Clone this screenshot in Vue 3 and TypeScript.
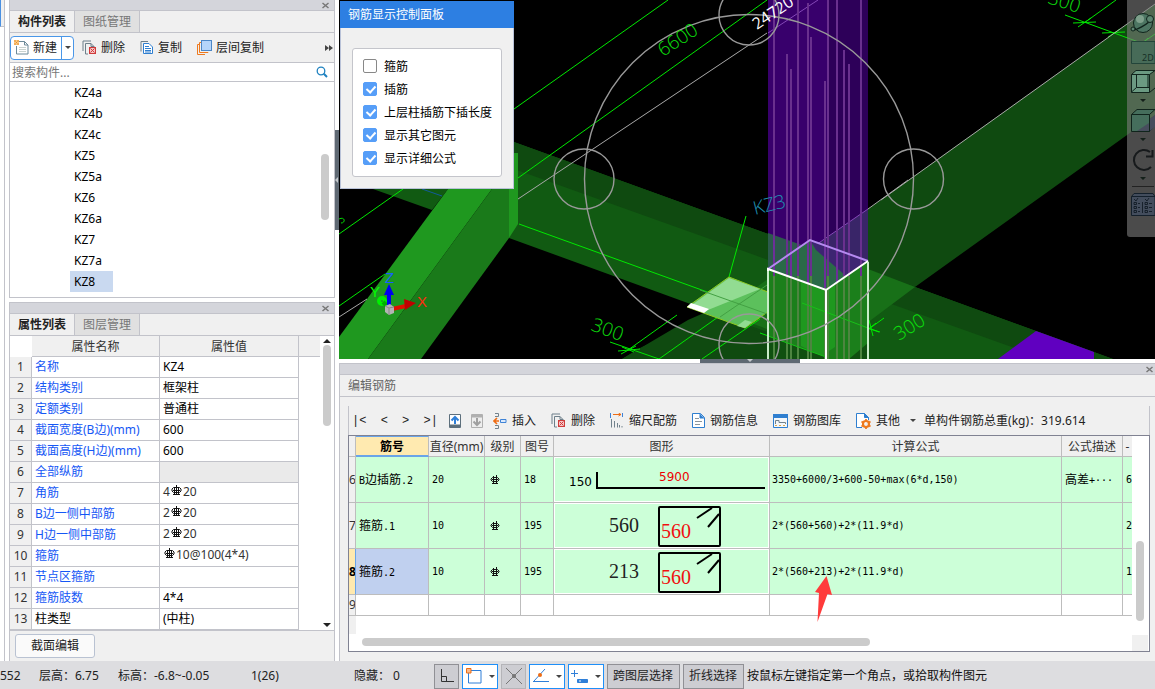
<script setup lang="ts">
import { ref } from 'vue'

interface PropertyRow {
  name: string
  value: string
  linked?: boolean
  disabled?: boolean
  rebar?: boolean
}

interface RebarRow {
  no: number
  name: string
  diameter: string
  code: string
  left: string
  length: string
  formula: string
  note: string
  extra: string
}

const components: string[] = ['KZ4a', 'KZ4b', 'KZ4c', 'KZ5', 'KZ5a', 'KZ6', 'KZ6a', 'KZ7', 'KZ7a', 'KZ8']
const selected = ref('KZ8')
const keyword = ref('')

const options = ref([
  { id: 'hoop', label: '箍筋', on: false },
  { id: 'dowel', label: '插筋', on: true },
  { id: 'upper', label: '上层柱插筋下插长度', on: true },
  { id: 'others', label: '显示其它图元', on: true },
  { id: 'formula', label: '显示详细公式', on: true },
])

const properties: PropertyRow[] = [
  { name: '名称', value: 'KZ4', linked: true },
  { name: '结构类别', value: '框架柱', linked: true },
  { name: '定额类别', value: '普通柱', linked: true },
  { name: '截面宽度(B边)(mm)', value: '600', linked: true },
  { name: '截面高度(H边)(mm)', value: '600', linked: true },
  { name: '全部纵筋', value: '', linked: true, disabled: true },
  { name: '角筋', value: '4#20', linked: true, rebar: true },
  { name: 'B边一侧中部筋', value: '2#20', linked: true, rebar: true },
  { name: 'H边一侧中部筋', value: '2#20', linked: true, rebar: true },
  { name: '箍筋', value: '#10@100(4*4)', linked: true, rebar: true },
  { name: '节点区箍筋', value: '', linked: true },
  { name: '箍筋肢数', value: '4*4', linked: true },
  { name: '柱类型', value: '(中柱)' },
]

const rebars: RebarRow[] = [
  { no: 6, name: 'B边插筋.2', diameter: '20', code: '18', left: '150', length: '5900', formula: '3350+6000/3+600-50+max(6*d,150)', note: '高差+···', extra: '6' },
  { no: 7, name: '箍筋.1', diameter: '10', code: '195', left: '560', length: '560', formula: '2*(560+560)+2*(11.9*d)', note: '', extra: '2' },
  { no: 8, name: '箍筋.2', diameter: '10', code: '195', left: '213', length: '560', formula: '2*(560+213)+2*(11.9*d)', note: '', extra: '1' },
]
const activeRebar = ref(8)

function runs(text: string): { text: string; wide: boolean }[] {
  const parts = text.match(/[\u4e00-\u9fff]+|[^\u4e00-\u9fff]+/g) ?? []
  return parts.map((p) => ({ text: p, wide: /[\u4e00-\u9fff]/.test(p) }))
}

const bars: [number, number][] = [
  [774, 0], [787, 54], [791, 69], [798, 0], [808, 3], [811, 37],
  [825, 81], [828, 0], [837, 0], [844, 50], [849, 64], [861, 0],
]
</script>

<template>
  <div class="app">
    <div class="main">
      <div class="edge"><div class="edge-tab"></div></div>

      <aside class="side">
        <section class="panel grow">
          <div class="titlebar"><button class="close" aria-label="关闭">
            <svg width="7" height="7" viewBox="0 0 7 7"><path d="M.5 1 6.500 6M6.500 1 .5 6" /></svg>
          </button></div>
          <div class="tabs">
            <button class="tab on">构件列表</button><button class="tab">图纸管理</button>
          </div>
          <div class="toolbar">
            <div class="split">
              <button class="tool new">
                <svg width="15" height="15" viewBox="0 0 15 15" fill="none">
                  <path d="M5 1.500H10.500L14 5V14H2.500V6" stroke="#6d8a99" fill="#fff" /><path d="M10.500 1.500V5H14" stroke="#6d8a99" />
                  <path d="M5 7.500H12M5 9.500H12M5 11.500H12" stroke="#c9d3cf" />
                  <path d="M0 1H5M0 4H5M1 0V5M4 0V5" stroke="#f0941e" /><path d="M2 2.500H3" stroke="#f0941e" />
                </svg>新建
              </button>
              <button class="drop" aria-label="更多新建"><i class="caret"></i></button>
            </div>
            <button class="tool">
              <svg width="15" height="15" viewBox="0 0 15 15" fill="none">
                <path d="M1 11V1H9" stroke="#6d7f8a" /><path d="M6 14H3.500V3.500H9L12.500 7V7" stroke="#6d7f8a" /><path d="M9 3.500V6.500H12" stroke="#6d7f8a" />
                <rect x="7.500" y="7.500" width="6" height="6" fill="#f6c4c4" stroke="#cf3b3b" /><path d="M8.500 8.500 12.500 12.500M12.500 8.500 8.500 12.500" stroke="#cf3b3b" />
              </svg>删除
            </button>
            <button class="tool copy">
              <svg width="14" height="15" viewBox="0 0 14 15" fill="none">
                <path d="M1 11.500V1.500H8" stroke="#6d7f8a" /><path d="M3.500 3.500H9L12.500 7V13.500H3.500Z" fill="#fff" stroke="#2f7fd0" />
                <path d="M5 6.500H9M5 8.500H11M5 10.500H11M5 12H11" stroke="#2f7fd0" />
              </svg>复制
            </button>
            <button class="tool layer">
              <svg width="15" height="15" viewBox="0 0 15 15" fill="none">
                <path d="M3 4.500H.5V14.500H8" stroke="#ee7a1f" /><path d="M5 2.500H2.500V12.500H11V12" stroke="#ee7a1f" />
                <rect x="4.500" y=".5" width="10" height="10" fill="#b5d5fa" stroke="#4c87c7" />
              </svg>层间复制
            </button>
            <button class="more" aria-label="更多">
              <svg width="8" height="6" viewBox="0 0 8 6"><path d="M0 0 4 3 0 6ZM4 0 8 3 4 6Z" fill="#444" /></svg>
            </button>
          </div>
          <div class="search">
            <input v-model="keyword" type="text" placeholder="搜索构件..." aria-label="搜索构件" />
            <button aria-label="搜索">
              <svg width="12" height="12" viewBox="0 0 12 12" fill="none" stroke="#1f82c0" stroke-width="1.300"><circle cx="5" cy="5" r="3.800" /><path d="M7.800 7.800 11 11" stroke-width="2" /></svg>
            </button>
          </div>
          <div class="list">
            <ul>
              <li v-for="c in components" :key="c">
                <button :class="{ picked: c === selected }" @click="selected = c">{{ c }}</button>
              </li>
            </ul>
            <div class="vbar list-thumb"></div>
          </div>
        </section>

        <section class="panel">
          <div class="titlebar"><button class="close" aria-label="关闭">
            <svg width="7" height="7" viewBox="0 0 7 7"><path d="M.5 1 6.500 6M6.500 1 .5 6" /></svg>
          </button></div>
          <div class="tabs">
            <button class="tab on">属性列表</button><button class="tab">图层管理</button>
          </div>
          <div class="props">
            <table>
              <colgroup><col class="p-no" /><col class="p-name" /><col class="p-val" /><col /></colgroup>
              <thead>
                <tr><th class="blank"></th><th>属性名称</th><th>属性值</th><th class="tail"></th></tr>
              </thead>
              <tbody>
                <tr v-for="(p, i) in properties" :key="p.name">
                  <th>{{ i + 1 }}</th>
                  <td :class="{ link: p.linked }">{{ p.name }}</td>
                  <td :class="{ off: p.disabled, soft: p.rebar }">
                    <template v-if="p.rebar">{{ p.value.split('#')[0] }}<svg class="sym" width="11" height="12" viewBox="0 0 11 12" fill="none" stroke="#111"><path d="M2.500 2.500H8.500L10 4V6L8.500 7.500H2.500L1 6V4Z" /><path d="M5.500 0V10M3.500 2V9M7.500 2V9M2 9.500H9M2 5.500H9" /></svg>{{ p.value.split('#')[1] }}</template>
                    <template v-else>{{ p.value }}</template>
                  </td>
                  <td class="tail"></td>
                </tr>
              </tbody>
            </table>
            <div class="pscroll">
              <svg width="8" height="4" viewBox="0 0 8 4"><path d="M0 4 4 0 8 4Z" fill="#222" /></svg>
              <div class="vbar prop-thumb"></div>
              <svg class="down" width="8" height="4" viewBox="0 0 8 4"><path d="M0 0 4 4 8 0Z" fill="#222" /></svg>
            </div>
          </div>
          <div class="foot"><button class="edit">截面编辑</button></div>
        </section>
      </aside>

      <div class="vsplit"><div><svg width="3" height="6" viewBox="0 0 3 6"><path d="M3 0 0 3 3 6Z" fill="#c4c8cc" /></svg></div></div>

      <div class="work">
        <div class="scene">
          <svg class="view" viewBox="339 0 816 359" preserveAspectRatio="xMinYMin slice" fill="none">
            <rect x="339" width="816" height="359" fill="#000" />
            <!-- beams -->
            <path d="M1155 4 868 209 735 303 640 348 622 359H820L835 347 915 287 1155 115Z" fill="#0f4a10" />
            <path d="M514 142 735 222 915 287 1036 331 1113 359H842L509 238Z" fill="#115a12" />
            <path d="M514 142 735 222 915 287 1036 331 1113 359H1045L735 248 514 169Z" fill="#0f4a10" />
            <path d="M868 269 915 287 835 347 806 343 745 321 700 311 735 303 810 248Z" fill="#187018" />
            <path d="M622 359 688 320 706 312 760 332 800 345 815 359Z" fill="#0f4a10" />
            <path d="M373 189H448L432 210Z" fill="#115a12" />
            <path d="M448 189H492L368 359H339V337Z" fill="#1f981f" />
            <path d="M492 189H509V238L421 359H368Z" fill="#1a7a1a" />
            <path d="M509 153H518V224L509 238Z" fill="#1f981f" />
            <path d="M422 189 442 196" stroke="#135a9a" />
            <path d="M998 359 1036 331 1094 352V359Z" fill="#6000c0" />
            <!-- axis lines -->
            <g stroke="#00e800">
              <path d="M514 109 668 0M518 178 767 0M339 234 403 189M339 306 385 274" />
              <path d="M519 224 735 302M746 216 729 277M802 303 868 328 880 332M760 333 830 358M1065 15 1155 48M1084 23 1116 0M1142 43 1155 34" />
              <path d="M610 342 659 359M628 350 677 315M659 359 735 305M702 359 760 319M829 358 884 318M618 351 640 349M621 354 636 346M622 347 634 352M858 325 879 332M869 320 873 336M861 335 876 323M840 340 859 345M848 334 850 349M842 349 858 337M1073 23 1096 22M1078 27 1091 18M1102 33 1125 32M1108 37 1120 29M1132 43 1150 43M1137 48 1148 38" />
            </g>
            <path d="M518 199 767 33M339 317 367 299M881 200 1155 4M868 209 908 180" stroke="#a8a8a8" />
            <path d="M339 219C345 216 346 223 341 223" stroke="#00d800" />
            <!-- slab -->
            <path d="M729 277 687 307 745 328 786 299Z" fill="#5cc05c" stroke="#8fca20" />
            <path d="M729 278 689 307 703 312 760 289Z" fill="#92dc92" />
            <path d="M737 326 745 320 752 322 745 328Z" fill="#92dc92" />
            <path d="M691 303 687 307 704 313 709 309Z" fill="#fff" />
            <path d="M700 290 770 315M720 317 770 283" stroke="#43a043" />
            <!-- column -->
            <path d="M768 0H828V246L810 240 768 269Z" fill="#38006c" />
            <path d="M828 0H868V261L828 246Z" fill="#2d0059" />
            <path d="M768 233 810 248V240L768 269Z" fill="#2d5a4d" />
            <path d="M868 209V261L810 240 812 248Z" fill="#392568" />
            <path d="M768 33 818 0M868 209 810 249" stroke="#8548b8" />
            <path d="M768 269 810 240 868 261 826 290Z" fill="#2a6a48" />
            <path d="M810 240 868 261 846 276 816 250Z" fill="#3d2572" />
            <path d="M768 269 826 290 868 261V359H768Z" fill="#1b7f1b" />
            <path d="M801 282 826 290V359L801 346ZM826 290 835 284V347L826 353Z" fill="#1f981f" />
            <path d="M768 336 826 357V359H768Z" fill="#105010" />
            <path d="M849 359 868 343V359Z" fill="#105010" />
            <g v-for="b in bars" :key="b[0]">
              <path :d="`M${b[0]} ${b[1]}V276`" stroke="#69308e" stroke-width="2" />
              <path :d="`M${b[0]} 276V359`" stroke="#4d8540" stroke-width="2" />
            </g>
            <path d="M774 240V270M791 240V277M808 240V283M825 240V288M837 240V282" stroke="#6d2f9a" stroke-width="2" />
            <path d="M802 303 868 328M768 336 826 357" stroke="#18c018" />
            <path d="M768 269 810 240 868 261" stroke="#b58af0" stroke-width="2" />
            <path d="M768 359V269L826 290 868 261M826 290V359" stroke="#fff" stroke-width="2" />
            <path d="M768 271V359M868 262V359" stroke="#c9ecc9" stroke-width="2" />
            <!-- grips -->
            <g stroke="#999">
              <circle cx="749" cy="179" r="164.500" stroke-width="1.400" />
              <circle cx="584" cy="179" r="30" stroke-width="1.400" /><circle cx="749" cy="15" r="30" stroke-width="1.400" />
              <circle cx="913.500" cy="179" r="30" stroke-width="1.400" /><circle cx="749" cy="344" r="30" stroke-width="1.400" />
            </g>
            <!-- dimension texts -->
            <g class="dim" fill="#0de00d">
              <text transform="translate(663 57) rotate(-33)">6600</text>
              <text transform="translate(1047 3) rotate(18)">300</text>
              <text transform="translate(590 330) rotate(20)">300</text>
              <text transform="translate(899 341) rotate(-32)">300</text>
            </g>
            <text class="dim total-mark" transform="translate(757 30) rotate(-34)" fill="#fff">24720</text>
            <text class="dim" transform="translate(755 215) rotate(-14)" fill="#1f8fb0">KZ3</text>
            <!-- axes gizmo -->
            <text class="axis" x="370" y="297" fill="#0f0">Y</text>
            <text class="axis" x="417" y="307" fill="#ff2a10">X</text>
            <circle cx="382" cy="301" r="3" stroke="#00f000" stroke-width="4" /><path d="M383 302 388 307" stroke="#00b000" stroke-width="4" />
            <path d="M389 294V308" stroke="#0000f0" stroke-width="4" /><path d="M389 284 394 295H384Z" fill="#0000f0" />
            <path d="M392 309 406 306" stroke="#e01000" stroke-width="4" /><path d="M404 299 416 303 405 310Z" fill="#c00000" />
            <path d="M385 306 390 304 394 307V313L389 315 385 312Z" fill="#b4b4b4" /><path d="M385 306 389 308 394 307M389 308V315" stroke="#888" />
            <text class="axis" x="385" y="283" fill="#1560ff">Z</text>
          </svg>

          <div class="viewbar">
            <svg width="28" height="237" viewBox="1127 0 28 237" fill="none" stroke="#10241c">
              <circle cx="1143" cy="23" r="9.500" fill="#4c7562" /><circle cx="1140" cy="19" r="4" fill="#7fa08c" stroke="none" /><path d="M1132 29C1134 32 1149 24 1152 18" stroke-width="1.500" /><circle cx="1150" cy="19" r="3.500" fill="#5d8571" /><circle cx="1133" cy="29" r="2" fill="#5d8571" />
              <path d="M1131.500 41.500H1155V63.500H1131.500Z" fill="#476b58" stroke="#23453a" />
              <text x="1142" y="61" fill="#163026" stroke="none">2D</text>
              <path d="M1131.500 74.500H1149.500V92.500H1131.500ZM1131.500 74.500 1136 70.500H1155L1149.500 74.500M1149.500 92.500 1155 88" fill="#6b9a82" /><path d="M1136.500 75V87.500H1149M1131.500 92 1136.500 87.500M1148 75V87" />
              <path d="M1131.500 114.500H1149.500V131.500H1131.500ZM1131.500 114.500 1137 109.500H1155L1149.500 114.500M1149.500 131.500 1155 126" fill="#456e5c" /><path d="M1150 119 1155 115V127L1150 131ZM1137 131 1149 123V131Z" fill="#474d5d" stroke="none" />
              <path d="M1150 152A10 10 0 1 0 1151 167" stroke="#171a1c" stroke-width="2" /><path d="M1146 156.500H1152.500V150" stroke="#171a1c" stroke-width="2" />
              <path d="M1140 99H1146L1143 102ZM1140 138H1146L1143 141ZM1140 177H1146L1143 180Z" fill="#14201a" stroke="none" />
              <path d="M1132 186.500H1154" stroke="#222" />
              <path d="M1131.500 196.500 1134 193.500H1153L1155 196.500M1131.500 196.500H1155V215.500H1131.500Z" fill="#434d5d" stroke="#14202c" />
              <path d="M1142.500 202V213M1134 199 1136 201 1138 198M1145 199 1147 201 1149 198M1138 203.500H1140M1138 207.500H1140M1138 211.500H1140M1149 203.500H1152M1149 207.500H1152M1149 211.500H1152M1134 202.500H1136.500V204.500H1134ZM1134 206.500H1136.500V208.500H1134ZM1134 210.500H1136.500V212.500H1134ZM1145 202.500H1147.500V204.500H1145ZM1145 206.500H1147.500V208.500H1145ZM1145 210.500H1147.500V212.500H1145Z" stroke="#0c1620" stroke-width=".8" />
            </svg>
          </div>

          <div class="float">
            <h2>钢筋显示控制面板</h2>
            <div class="group">
              <label v-for="o in options" :key="o.id"><input v-model="o.on" type="checkbox" />{{ o.label }}</label>
            </div>
          </div>
        </div>

        <div class="hsplit"><div><svg width="6" height="3" viewBox="0 0 6 3"><path d="M0 0H6L3 3Z" fill="#c4c8cc" /></svg></div></div>

        <section class="editor">
          <div class="titlebar"><button class="close" aria-label="关闭">
            <svg width="7" height="7" viewBox="0 0 7 7"><path d="M.5 1 6.500 6M6.500 1 .5 6" /></svg>
          </button></div>
          <h2 class="caption">编辑钢筋</h2>
          <div class="inner">
            <div class="bar">
              <div class="navs">
                <button>|&lt;</button><button>&lt;</button><button>&gt;</button><button>&gt;|</button>
              </div>
              <button class="ico" aria-label="上移">
                <svg width="12" height="14" viewBox="0 0 12 14" fill="none"><path d="M.5.5H11.500V13.500H.5Z" fill="#fff" stroke="#5d6f7c" /><path d="M1 12H11" stroke="#5d6f7c" stroke-width="3" /><path d="M6 10V3M2.500 6.500 6 3 9.500 6.500" stroke="#2f7fd8" stroke-width="2" /></svg>
              </button>
              <button class="ico" aria-label="下移">
                <svg width="12" height="14" viewBox="0 0 12 14" fill="none"><path d="M.5.5H11.500V13.500H.5Z" fill="#eee" stroke="#b0b0b0" /><path d="M1 2H11" stroke="#b0b0b0" stroke-width="3" /><path d="M6 4V11M2.500 7.500 6 11 9.500 7.500" stroke="#a0a0a0" stroke-width="2" /></svg>
              </button>
              <button class="tool">
                <svg width="14" height="16" viewBox="0 0 14 16" fill="none"><path d="M2 .5H5.500V3.500H2M2 12.500H5.500V15.500H2" stroke="#72828c" /><path d="M1 8H6M4 5 1 8 4 11" stroke="#ee6c14" stroke-width="1.600" /><path d="M7.500 6.500H13V9.500H7.500Z" fill="#dbe9fb" stroke="#3f83d6" /></svg>插入
              </button>
              <button class="tool">
                <svg width="15" height="15" viewBox="0 0 15 15" fill="none">
                  <path d="M1 11V1H9" stroke="#6d7f8a" /><path d="M6 14H3.500V3.500H9L12.500 7V7" stroke="#6d7f8a" /><path d="M9 3.500V6.500H12" stroke="#6d7f8a" />
                  <rect x="7.500" y="7.500" width="6" height="6" fill="#f6c4c4" stroke="#cf3b3b" /><path d="M8.500 8.500 12.500 12.500M12.500 8.500 8.500 12.500" stroke="#cf3b3b" />
                </svg>删除
              </button>
              <button class="tool">
                <svg width="14" height="15" viewBox="0 0 14 15" fill="none"><path d="M.5 0V5M12.500 0V4" stroke="#3f83d6" /><path d="M3 1.500H11M8.500 0 11 1.500 8.500 3" stroke="#ee6c14" /><path d="M1.500 6V14.500M4.500 8V14.500M7.500 10V14.500M9.500 12V14.500M12 13V14.500" stroke="#72828c" /></svg>缩尺配筋
              </button>
              <button class="tool">
                <svg width="13" height="15" viewBox="0 0 13 15" fill="none"><path d="M.5.5H8.500L12.500 4.500V14.500H.5Z" fill="#fff" stroke="#2f7fd0" /><path d="M8 1V5H12" fill="#2f7fd0" stroke="#2f7fd0" /><path d="M3 5.500H7M3 8.500H10M3 11.500H8" stroke="#8a949b" /></svg>钢筋信息
              </button>
              <button class="tool">
                <svg width="15" height="14" viewBox="0 0 15 14" fill="none"><path d="M.5 1H14.500V13.500H.5Z" fill="#f4f7fa" stroke="#2f7fd0" /><path d="M0 2H15" stroke="#2f7fd0" stroke-width="4" /><path d="M2.500 10V6.500H6V8.500H12.500V10" stroke="#72828c" /><path d="M2 11.500H4M6 11.500H8M10 11.500H12" stroke="#d9a94c" /></svg>钢筋图库
              </button>
              <button class="tool other">
                <svg width="15" height="16" viewBox="0 0 15 16" fill="none"><path d="M6 14.500H.5V.5H8.500L12.500 4.500V7" fill="#fff" stroke="#2f7fd0" /><path d="M8.500.5V4.500H12.500Z" fill="#2f7fd0" stroke="#2f7fd0" /><circle cx="10" cy="11" r="3" stroke="#ee7a1f" stroke-width="2.200" /><path d="M10 6V8M10 14V16M5.500 8.500 7 9.500M13 12.500 14.500 13.500M5.500 13.500 7 12.500M13 9.500 14.500 8.500" stroke="#ee7a1f" stroke-width="1.800" /></svg>其他<i class="caret"></i>
              </button>
              <span class="total">单构件钢筋总重(kg)：319.614</span>
            </div>
            <div class="gridbox">
              <div class="gridmain">
                <table class="grid">
                  <colgroup><col class="g-no" /><col class="g-name" /><col class="g-dia" /><col class="g-lv" /><col class="g-code" /><col class="g-pic" /><col /><col class="g-note" /><col class="g-ext" /></colgroup>
                  <thead>
                    <tr><th></th><th class="cur">筋号</th><th>直径(mm)</th><th>级别</th><th>图号</th><th>图形</th><th>计算公式</th><th>公式描述</th><th>-</th></tr>
                  </thead>
                  <tbody>
                    <tr v-for="r in rebars" :key="r.no" @click="activeRebar = r.no">
                      <th :class="{ now: r.no === activeRebar }">{{ r.no }}</th>
                      <td :class="{ sel: r.no === activeRebar }">
                        <span v-for="(t, i) in runs(r.name)" :key="i" :class="{ wide: t.wide }">{{ t.text }}</span>
                      </td>
                      <td>{{ r.diameter }}</td>
                      <td><svg class="lv" width="10" height="12" viewBox="0 0 10 12" fill="none" stroke="#111"><path d="M2.500 3.500H7.500L9 5V6L7.500 7.500H2.500L1 6V5Z" /><path d="M3.500 2V9M6.500 1V10M2 9.500H8M2 5.500H8" /></svg></td>
                      <td>{{ r.code }}</td>
                      <td class="pic">
                        <svg v-if="r.no === 6" width="215" height="45" viewBox="0 0 215 45" fill="none">
                          <path d="M43 15V31H211" stroke="#000" stroke-width="2" />
                          <text class="s12" x="15" y="29" fill="#000">{{ r.left }}</text><text class="s12" x="105" y="24" fill="#e00">{{ r.length }}</text>
                        </svg>
                        <svg v-else width="215" height="45" viewBox="0 0 215 45" fill="none">
                          <rect x="105" y="4" width="61" height="39" rx="1" stroke="#000" stroke-width="2" />
                          <path d="M143 15 158 5M154 24 165 11" stroke="#000" stroke-width="2" />
                          <text class="s20" x="55" y="29" fill="#222">{{ r.left }}</text><text class="s20" x="107" y="35" fill="#f01010">{{ r.length }}</text>
                        </svg>
                      </td>
                      <td class="calc">{{ r.formula }}
                        <svg v-if="r.no === 8" class="mark" width="18" height="46" viewBox="0 0 18 46"><path d="M11.500 0 17 19 12.500 18 2.500 46 4 17 0 16Z" fill="#ff3b3b" /></svg>
                      </td>
                      <td><span v-for="(t, i) in runs(r.note)" :key="i" :class="{ wide: t.wide }">{{ t.text }}</span></td>
                      <td>{{ r.extra }}</td>
                    </tr>
                    <tr class="empty"><th>9</th><td v-for="n in 8" :key="n"></td></tr>
                  </tbody>
                </table>
                <div class="below"></div>
                <div class="htrack"><div class="hthumb"></div></div>
              </div>
              <div class="gscroll"><div class="vbar grid-thumb"></div><div class="corner"></div></div>
            </div>
          </div>
        </section>
      </div>
    </div>

    <footer class="status">
      <span class="s-id">552</span><span class="s-h">层高：6.75</span><span class="s-e">标高：-6.8~-0.05</span><span class="s-n">1(26)</span><span class="s-hid">隐藏： 0</span>
      <div class="snaps">
        <button class="snap gray" aria-label="正交"><svg width="14" height="14" viewBox="0 0 14 14" fill="none" stroke="#333"><path d="M1.500 0V12.500H14M1.500 7.500H6.500V12" /></svg></button>
        <button class="snap blue" aria-label="对象捕捉"><svg width="16" height="16" viewBox="0 0 16 16" fill="none"><path d="M2.500 2.500H15V15H2.500Z" stroke="#2f7fd8" /><path d="M.5.5H5V5H.5Z" fill="#f8b98a" stroke="#ee6c14" /></svg><i class="caret"></i></button>
        <button class="snap gray mid" aria-label="交点"><svg width="16" height="16" viewBox="0 0 16 16" fill="none" stroke="#777"><path d="M0 0 16 16M16 0 0 16" /><circle cx="8" cy="8" r="1.500" fill="#777" /></svg></button>
        <button class="snap blue" aria-label="角度"><svg width="16" height="14" viewBox="0 0 16 14" fill="none"><path d="M1 12 12 0M0 12.500H16" stroke="#2f7fd8" /><circle cx="7" cy="6" r="2" fill="#ee6c14" /></svg><i class="caret"></i></button>
        <button class="snap blue" aria-label="动态输入"><svg width="17" height="13" viewBox="0 0 17 13" fill="none"><path d="M0 3.500H7M3.500 0V7" stroke="#2f7fd8" /><path d="M6.500 9.500H16.500V12.500H6.500Z" fill="#2f7fd8" stroke="#2f7fd8" /><path d="M8 11H10" stroke="#fff" /></svg><i class="caret"></i></button>
        <button class="pick">跨图层选择</button>
        <button class="pick">折线选择</button>
      </div>
      <span class="hint">按鼠标左键指定第一个角点，或拾取构件图元</span>
    </footer>
  </div>
</template>

<style>
html, body { background: #fff; overflow: hidden; }
</style>

<style scoped>
.app, .app * { box-sizing: border-box; }
.app { display: flex; flex-direction: column; height: 100vh; background: #fff; color: #222; font: 12px/20px "Noto Sans", "Noto Sans CJK SC", sans-serif; }
button { font: inherit; color: inherit; margin: 0; padding: 0; border: 0; background: none; white-space: nowrap; }
svg { display: block; flex: none; }
h2 { margin: 0; font-size: 12px; font-weight: 400; }
table { border-spacing: 0; table-layout: fixed; width: 100%; }
th, td { padding: 0; font-weight: 400; overflow: hidden; white-space: nowrap; }

.main { flex: 1; display: flex; min-height: 0; }
.edge { flex: none; width: 5px; margin-right: 4px; border-right: 1px solid #c2c3ca; }
.edge-tab { height: 27px; background: #f0f0f0; border-left: 1px solid #4a90e2; border-bottom: 1px solid #c2c3ca; }
.side { flex: none; width: 326px; display: flex; flex-direction: column; gap: 4px; }
.panel { display: flex; flex-direction: column; border: 1px solid #c2c3ca; border-bottom: 0; background: #f0f0f0; }
.grow { flex: 1; min-height: 0; border-top: 0; border-bottom: 1px solid #c2c3ca; }
.titlebar { flex: none; display: flex; justify-content: flex-end; align-items: center; height: 11px; padding-right: 5px; background: #d4d5db; border-bottom: 1px solid #c2c3ca; }
.close svg { stroke: #777; stroke-width: 1.5; fill: none; }
.tabs { flex: none; display: flex; height: 22px; border-bottom: 1px solid #c2c3ca; }
.tab { width: 65px; line-height: 20px; border-right: 1px solid #c2c3ca; background: #e0e0e0; color: #777; }
.tab.on { background: #f0f0f0; color: #222; font-weight: 700; }

.toolbar { flex: none; display: flex; align-items: center; height: 30px; border-bottom: 1px solid #c2c3ca; padding-right: 1px; gap: 15px; }
.tool { display: flex; align-items: center; gap: 5px; }
.toolbar .tool { gap: 4px; }
.split { display: flex; height: 24px; width: 64px; margin-right: -7px; border: 1px solid #4a97e8; border-radius: 4px; background: #fff; }
.new { flex: 1; padding-left: 3px; }
.drop { width: 12px; display: flex; align-items: center; justify-content: center; border-left: 1px solid #4a97e8; }
.caret { width: 0; height: 0; border: 3px solid transparent; border-top-color: #444; border-bottom-width: 0; }
.more { margin-left: auto; }
.search { flex: none; display: flex; align-items: center; height: 19px; padding-right: 6px; background: #fff; border-bottom: 1px solid #c2c3ca; }
.search input { flex: 1; min-width: 0; border: 0; outline: 0; padding: 1px 2px 0; font: inherit; line-height: 18px; height: 18px; background: transparent; }
.search input::placeholder { color: #777; }
.list { flex: 1; display: flex; justify-content: space-between; min-height: 0; overflow: hidden; background: #fff; }
ul { list-style: none; margin: 0; padding: 0 0 0 60px; }
li { height: 21px; }
li button { display: block; min-width: 43px; height: 21px; padding: 0 4px; text-align: left; color: #000; }
.picked { background: #c9d9f0; }
.vbar { width: 8px; border-radius: 4px; background: #cbcbcb; }
.list-thumb { height: 66px; margin: 72px 5px 0 0; }

.props { display: flex; background: #fff; border-bottom: 1px solid #c2c3ca; overflow: hidden; }
.props table { flex: 1; }
.props th, .props td { height: 21px; line-height: 20px; border-right: 1px solid #c2c3ca; border-bottom: 1px solid #c2c3ca; }
.props th { background: #f0f0f0; color: #333; }
.props thead th { padding-top: 2px; line-height: 18px; }
.props td { padding-left: 3px; color: #000; }
.props td.link { color: #1557f5; }
.props td.off { background: #eaeaea; }
.props td.soft { color: #333; line-height: 18px; padding-bottom: 2px; }
.props th.tail { border-right: 0; }
.props td.tail, .props th.blank { border: 0; background: #fff; }
.p-no { width: 22px; }
.p-name { width: 128px; }
.p-val { width: 139px; }
.sym { display: inline-block; vertical-align: -1px; margin: 0 1px; }
.pscroll { width: 14px; display: flex; flex-direction: column; align-items: center; padding: 3px 1px 3px 0; }
.prop-thumb { height: 81px; margin-top: 2px; }
.down { margin-top: auto; }
.foot { height: 30px; padding: 3px 5px; }
.edit { display: block; width: 80px; height: 24px; border: 1px solid #b9c2d2; border-radius: 3px; background: #fafafa; }

.vsplit { flex: none; width: 4px; padding-top: 130px; }
.vsplit div { height: 100px; display: flex; align-items: center; background: #5f6973; }
.work { flex: 1; min-width: 0; display: flex; flex-direction: column; }
.scene { flex: 1; position: relative; min-height: 0; overflow: hidden; background: #000; }
.view { position: absolute; inset: 0; width: 100%; height: 100%; }
.dim { font: 300 19px "Open Sans", sans-serif; }
.total-mark { font-size: 16px; font-weight: 400; }
.axis { font: 15px "Liberation Sans", sans-serif; }
.viewbar { position: absolute; top: 0; right: 0; height: 237px; border-radius: 0 0 0 3px; background: rgba(125, 125, 125, .6); }
.viewbar text { font: 9px "Noto Sans", sans-serif; }
.float { position: absolute; left: 1px; top: 1px; width: 174px; padding-bottom: 11px; background: #f0f0f0; border: 1px solid #b9c2d8; border-top: 0; }
.float h2 { height: 27px; line-height: 27px; margin: 0 -1px; padding-left: 8px; background: #2d7fe2; color: #fff; }
.group { margin: 20px 11px 0; padding: 6px 10px; border: 1px solid #c4c5cb; border-radius: 3px; background: #fff; }
.group label { display: flex; align-items: center; gap: 7px; height: 23px; color: #000; white-space: nowrap; }
.group input { appearance: none; flex: none; position: relative; width: 14px; height: 14px; margin: 0 0 2px; border: 1px solid #888; border-radius: 2px; background: #fff; }
.group input:checked { background: #569ef8; border-color: #569ef8; }
.group input:checked::after { content: ""; position: absolute; left: 4px; top: 1px; width: 4px; height: 7px; border: solid #fff; border-width: 0 2px 2px 0; transform: rotate(42deg); }
.hsplit { flex: none; display: flex; justify-content: center; height: 4px; }
.hsplit div { width: 100px; display: flex; justify-content: center; background: #5f6973; margin-left: 6px; }

.editor { flex: none; border-top: 1px solid #c2c3ca; border-left: 1px solid #c2c3ca; background: #f0f0f0; padding-bottom: 9px; }
.editor .titlebar { padding-right: 2px; }
.caption { height: 22px; line-height: 21px; padding-left: 8px; color: #666; border-bottom: 1px solid #c2c3ca; }
.inner { margin: 9px 5px 0 8px; }
.bar { display: flex; align-items: center; height: 29px; border-left: 1px solid #c2c3ca; border-right: 1px solid #c2c3ca; padding-left: 3px; overflow: hidden; }
.navs { display: flex; justify-content: space-between; width: 86px; margin-right: 11px; }
.navs button { font: 12px/20px "Liberation Mono", monospace; }
.bar .ico { width: 22px; }
.bar .tool { margin-right: 15px; }
.bar .other { margin-right: 8px; }
.other .caret { margin-left: 5px; }
.total { white-space: nowrap; }
.gridbox { display: flex; border: 1px solid #808292; background: #fff; height: 217px; }
.gridmain { flex: 1; min-width: 0; overflow: hidden; }
.grid th, .grid td { border-right: 1px solid #bdbdbd; border-bottom: 1px solid #bdbdbd; }
.grid th:last-child, .grid td:last-child { border-right: 0; }
.grid thead th { height: 21px; padding-top: 2px; line-height: 18px; background: #f0f0f0; color: #333; }
.grid thead th.cur { padding-top: 1px; background: #ffeab0; color: #000; font-weight: 700; border-bottom: 2px solid #6aa4e8; border-top: 1px solid #6aa4e8; line-height: 17px; }
.grid tbody th { background: #f0f0f0; color: #333; text-align: left; }
.grid tbody th:last-child { border-right: 1px solid #bdbdbd; }
.grid tbody th.now { background: #ffe9ae; border-right-color: #6aa4e8; font-weight: 700; color: #000; }
.grid td { height: 46px; padding-left: 3px; background: #ccffd8; color: #000; font: 10px/20px "DejaVu Sans Mono", monospace; }
.grid .wide { font: 12px/20px "Noto Sans CJK SC", sans-serif; }
.grid td.sel { background: #c0d0ef; }
.grid td.pic { padding: 0; box-shadow: inset 1px 1px #fff, inset -1px -1px #fff; }
.grid td.calc { position: relative; overflow: visible; padding-left: 2px; }
.grid .empty th, .grid .empty td { height: 21px; background: #fff; }
.grid .empty th { background: #f0f0f0; line-height: 20px; }
.mark { position: absolute; left: 45px; top: 27px; z-index: 1; }
.lv { margin-left: 2px; }
.s12 { font: 12px "DejaVu Sans", sans-serif; }
.s20 { font: 20px "Liberation Serif", serif; }
.g-no { width: 7px; }
.g-name { width: 73px; }
.g-dia { width: 56px; }
.g-lv { width: 36px; }
.g-code { width: 33px; }
.g-pic { width: 216px; }
.g-note { width: 61px; }
.g-ext { width: 9px; }
.below { width: 7px; height: 18px; background: #f0f0f0; }
.htrack { height: 17px; padding: 4px 0 0 13px; }
.hthumb { width: 66%; height: 8px; border-radius: 4px; background: #cbcbcb; }
.gscroll { width: 17px; padding-right: 1px; display: flex; flex-direction: column; align-items: center; justify-content: space-between; }
.grid-thumb { height: 80px; margin-top: 105px; }
.corner { width: 16px; height: 16px; background: #f0f0f0; }

.status { flex: none; display: flex; align-items: center; height: 28px; padding-top: 2px; overflow: hidden; background: #dddde0; color: #222; white-space: nowrap; }
.status span { flex: none; }
.s-id { width: 39px; }
.s-h { width: 79px; }
.s-e { width: 133px; }
.s-n { width: 103px; }
.s-hid { width: 80px; }
.snaps { display: flex; gap: 3px; margin-right: 3px; }
.snap { height: 25px; display: flex; align-items: center; justify-content: center; gap: 7px; }
.gray { width: 25px; border: 1px solid #909095; background: #cdcdd2; }
.mid { border-color: #b4b4b8; }
.blue { width: 36px; border: 1px solid #1e8ff8; background: #fff; }
.pick { height: 25px; padding: 0 6px 0 5px; border: 1px solid #909095; background: #cdcdd2; }
.hint { color: #111; }
</style>
